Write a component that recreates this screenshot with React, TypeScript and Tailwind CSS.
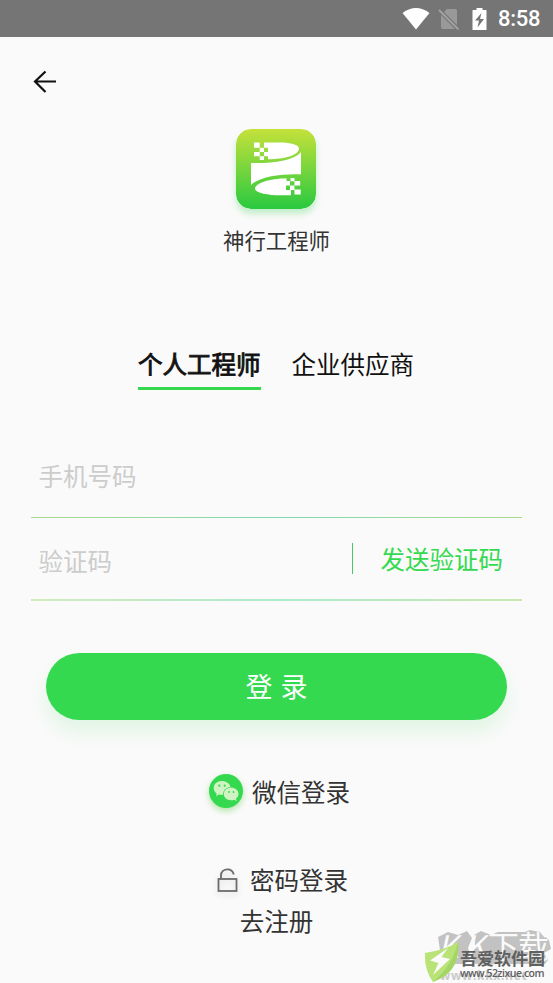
import React from 'react'

const Logo = () => {
    return (
        <svg viewBox="0 0 80 80" className="mr-px block h-20 w-20 rounded-[15px] shadow-[0_5px_6px_rgba(52,210,75,0.28)]">
            <defs>
                <linearGradient id="logo-bg" x1="0" y1="0" x2="0" y2="1">
                    <stop offset="0" stopColor="#c5e13a" />
                    <stop offset="1" stopColor="#29c940" />
                </linearGradient>
            </defs>
            <rect width="80" height="80" rx="15" fill="url(#logo-bg)" />
            <g fill="#fff">
                <path d="M28 13.500H44C55 13.500 63 16 63 19.500C63 25.500 50 30.300 32 30.300V27.300H28V23H32V18.700H28Z" />
                <path d="M18 13.500h5.700v5.200H18zM23.700 18.700H28V23h-4.300zM18 23h5.700v4.300H18zM23.700 27.300H28v3.700h-4.300z" />
                <path d="M15 34C38 34.500 58 31.500 65 23V45.300C43 44.500 23 48 15 56Z" />
                <path d="M50.500 49.300C34 49.800 19 54 19 60C20 64 32 66.300 45 66.300H55V61H50V56.500H54V52H50.500Z" />
                <path d="M54.500 49h4v3.300h-4zM58.500 52h5.700v4.500h-5.700zM54 56.500h4.500V61H54zM58.500 60.500h6.200v5h-6.200z" />
            </g>
        </svg>
    )
}

const StatusBar = () => {
    return (
        <div className="flex h-[37px] items-center justify-end bg-[#757575] pr-3 text-white">
            <svg viewBox="0 0 28 22" className="h-[22px] w-7">
                <path d="M0.500 5Q14 -5 27.500 5L14 21.500Z" fill="#fff" />
            </svg>
            <svg viewBox="0 0 22 22" className="ml-2 h-[22px] w-[22px]">
                <path d="M9 1H17.500Q19 1 19 2.500V19.500Q19 21 17.500 21H5Q3 21 3 19V7Z" fill="#999" />
                <path d="M1 2L20.500 21.500" stroke="#757575" strokeWidth="4" />
                <path d="M1 2L20.500 21.500" stroke="#a3a3a3" strokeWidth="1.800" />
            </svg>
            <svg viewBox="0 0 15 24" className="ml-3 h-6 w-[15px]">
                <path d="M4.500 1h6v2H14q.5 0 .5.500V22.500q0 .5-.5.500H1q-.5 0-.5-.500V3.500Q.5 3 1 3H4.500Z" fill="#fff" />
                <path d="M9.500 6L3 13.500H7L5.500 20.500L12 12H8Z" fill="#757575" />
            </svg>
            <span className="ml-[11px] w-[43px] whitespace-nowrap font-[Roboto] text-[22px] leading-none font-medium tracking-[-0.300px]">8:58</span>
        </div>
    )
}

const WechatIcon = () => {
    return (
        <div className="mb-0.5 h-[34px] w-[34px] rounded-full bg-[#35d94f] shadow-[0_3px_6px_rgba(95,205,70,0.45)]">
            <svg viewBox="0 0 34 34" className="h-full w-full">
                <path d="M13 7C8 7 4.700 10.200 4.700 14C4.700 16.300 5.900 18.200 7.700 19.500L7 22L10 20.500Q12 21 14 20.700C14 16.500 17 13.200 21.500 13C20.700 9.500 17 7 13 7Z" fill="#d0f3c3" />
                <path d="M22 13.500C17.700 13.500 14.800 16.500 14.800 20C14.800 23.500 18 26.200 22 26.200Q23.500 26.200 25 25.700L27.500 27L27 24.500C28.700 23.300 29.500 21.800 29.500 20C29.500 16.500 26.300 13.500 22 13.500Z" fill="#d0f3c3" />
                <g fill="#35d94f">
                    <circle cx="10.300" cy="11.700" r="1.100" />
                    <circle cx="15.700" cy="11.700" r="1.100" />
                    <circle cx="20" cy="18" r="0.900" />
                    <circle cx="24.500" cy="18" r="0.900" />
                </g>
            </svg>
        </div>
    )
}

const Watermark = () => {
    return (
        <div className="absolute right-0 bottom-0 h-[63px] w-[132px] overflow-hidden">
            <svg viewBox="0 0 132 63" className="absolute inset-0 h-full w-full" fill="#c2c2c2">
                <path d="M17 17L27 12L37 15L46 11L51 18L47 28L50 38L44 44L19 44L15 37L19 30Z" />
                <path d="M53 15L60 11L70 15L77 12L104 12L109 10L119 12L128 20L130 29L123 33L127 40L124 44L54 44L50 36L54 26Z" />
            </svg>
            <div className="absolute top-[7px] left-[20px] flex text-[31px] leading-[36px] font-normal whitespace-nowrap text-[#fafafa]">
                <span className="w-[27px] -skew-x-12">K</span>
                <span className="w-[20px] -skew-x-12">K</span>
                <span className="tracking-[-1px]">下载</span>
            </div>
            <div className="absolute top-[49px] left-[19px] font-['Open_Sans'] text-[12px] leading-[14px] font-bold tracking-[0.700px] whitespace-nowrap text-[#c9c9c9]">www.kkx.net</div>
            <svg viewBox="0 0 36 42" className="absolute top-[21px] left-[3px] h-[42px] w-9">
                <path d="M1 12Q21 9 34 1Q37 31 9 41Q0 29 1 12Z" fill="#b9e377" />
                <path d="M34 1Q37 31 9 41Q29 24 34 1Z" fill="#a3d667" />
                <path d="M24 7L6 19.500L14.500 22L9 34L26 18L17.500 16Z" fill="#fafafa" />
            </svg>
            <div className="absolute top-[28px] left-[39px] text-[17px] leading-[20px] font-bold whitespace-nowrap text-[#606060]">吾爱软件园</div>
            <div className="absolute top-[46px] left-[39px] font-['Open_Sans'] text-[10.500px] leading-[14px] font-semibold tracking-[-0.500px] whitespace-nowrap text-[#606060]">www.52zixue.com</div>
        </div>
    )
}

const App = () => {
    return (
        <div className="relative h-[983px] w-[553px] overflow-hidden bg-[#fafafa] font-['Noto_Sans_CJK_SC',sans-serif] text-[#333]">
            <StatusBar />
            <div className="h-[92px] pt-[33px] pl-[33px]">
                <svg viewBox="0 0 24 24" className="h-6 w-6" fill="none" stroke="#111" strokeWidth="2.200">
                    <path d="M23 11.500H2M12.500 1.500L2 11.500L12.500 22" />
                </svg>
            </div>
            <div className="flex flex-col items-center">
                <Logo />
                <h1 className="mt-[15px] text-[21.400px] leading-8">神行工程师</h1>
            </div>

            <div className="mt-[88px] ml-[138px] flex gap-[31px] text-[24.500px] leading-10 text-[#111]">
                <div className="h-[46px] border-b-[3px] border-[#35d94f] [-webkit-text-stroke:0.900px_#111]">个人工程师</div>
                <div>企业供应商</div>
            </div>

            <div className="mx-[31px] mt-[66px]">
                <div className="flex h-[61px] items-start pl-[7.500px] text-[24.500px] leading-10 text-[#ccc]">手机号码</div>
                <div className="h-px bg-linear-to-r from-[#a9d98c] via-[#7fd9b4] to-[#a9d98c]" />
                <div className="flex h-[81px] items-start pl-[7.500px] text-[24.500px] leading-10">
                    <div className="mt-[23px] text-[#ccc]">验证码</div>
                    <div className="mt-[25px] ml-auto h-[31px] w-px bg-[#4cc763]" />
                    <div className="mt-[21px] mr-[19px] ml-7 text-[#35d94f]">发送验证码</div>
                </div>
                <div className="h-0.5 bg-linear-to-r from-[#d0eabb] via-[#aeebcf] to-[#c8e9ae]" />
            </div>

            <button className="mt-[52px] ml-[46px] flex h-[67px] w-[461px] items-center justify-center rounded-full bg-[#35d94f] text-[27px] text-white shadow-[0_12px_20px_rgba(53,217,79,0.130)]">
                <span className="flex gap-2"><span>登</span><span>录</span></span>
            </button>

            <div className="mt-[52px] flex items-center pl-[209px] text-[24.500px] leading-10">
                <WechatIcon />
                <span className="ml-[9px]">微信登录</span>
            </div>
            <div className="mt-12 flex items-center pl-[217px] text-[24.500px] leading-10">
                <svg viewBox="0 0 21 24" className="h-6 w-[21px] drop-shadow-[0_3px_3px_rgba(0,0,0,0.120)]" fill="none" stroke="#6b6b6b" strokeWidth="1.800">
                    <rect x="1.500" y="11" width="18" height="12" />
                    <path d="M4 11V7.500C4 3.500 7 1.300 10.500 1.300C13.500 1.300 16 3.300 16.800 6.500" />
                </svg>
                <span className="ml-3">密码登录</span>
            </div>
            <div className="mt-px text-center text-[24.500px] leading-10">去注册</div>
            <Watermark />
        </div>
    )
}

export default App
